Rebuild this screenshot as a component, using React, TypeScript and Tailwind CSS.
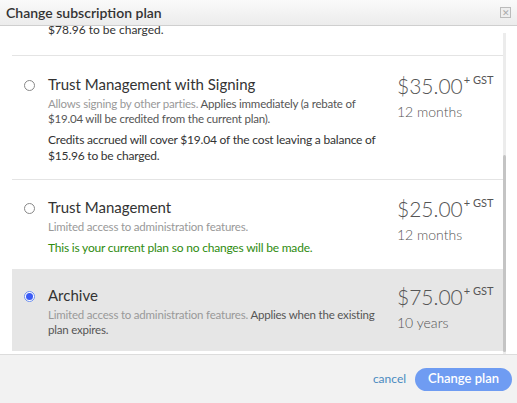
const font = { fontFamily: "Lato, 'Liberation Sans', sans-serif" };

function Price({ amount, term }: { amount: string; term: string }) {
  return (
    <div className="w-[106px] shrink-0 text-[#555]">
      <div className="flex items-start leading-none">
        <span className="text-[21px] font-light">{amount}</span>
        <span className="text-[11px] ml-[1px] -mt-[1px]">+ GST</span>
      </div>
      <div className="text-[14px] font-light mt-[5px]">{term}</div>
    </div>
  );
}

function Radio({ checked }: { checked?: boolean }) {
  return (
    <div className="w-[36px] shrink-0 pt-[5px] pl-[12px]">
      {checked ? (
        <div className="w-[11px] h-[11px] rounded-full border border-[#6b8ef0] bg-white flex items-center justify-center">
          <div className="w-[7px] h-[7px] rounded-full bg-[#3b5bf5]" />
        </div>
      ) : (
        <div className="w-[11px] h-[11px] rounded-full border border-[#888] bg-white" />
      )}
    </div>
  );
}

export default function App() {
  return (
    <div style={font} className="w-[517px] h-[403px] bg-white flex flex-col overflow-hidden">
      <div className="h-[26px] bg-gradient-to-b from-[#fafafa] to-[#ececec] border-b border-[#cfcfcf] flex items-center justify-between px-[6px] shrink-0">
        <span className="text-[14px] font-semibold text-[#333]">Change subscription plan</span>
        <span className="w-[11px] h-[11px] border border-[#bbb] bg-[#eee] text-[9px] leading-[9px] text-[#aaa] flex items-center justify-center">✕</span>
      </div>
      <div className="relative flex-1 overflow-hidden pl-[12px] pr-[14px]">
        <div className="-mt-[4px] pl-[36px] pb-[17px] border-b border-[#e4e4e4] text-[12px] text-[#333] leading-[16px]">
          $78.96 to be charged.
        </div>
        <div className="flex pt-[19px] pb-[15px] border-b border-[#e4e4e4]">
          <Radio />
          <div className="flex-1 pr-[6px]">
            <div className="text-[15px] text-[#333] leading-[18px]">Trust Management with Signing</div>
            <div className="text-[11.5px] tracking-[-0.2px] leading-[15px] mt-[3px] text-[#999]">
              Allows signing by other parties. <span className="text-[#555]">Applies immediately (a rebate of $19.04 will be credited from the current plan).</span>
            </div>
            <div className="text-[12px] tracking-[-0.2px] leading-[16px] mt-[6px] text-[#333]">
              Credits accrued will cover $19.04 of the cost leaving a balance of $15.96 to be charged.
            </div>
          </div>
          <Price amount="$35.00" term="12 months" />
        </div>
        <div className="flex pt-[18px] pb-[13px]">
          <Radio />
          <div className="flex-1 pr-[6px]">
            <div className="text-[15px] text-[#333] leading-[18px]">Trust Management</div>
            <div className="text-[11.5px] tracking-[-0.2px] leading-[15px] mt-[3px] text-[#999]">Limited access to administration features.</div>
            <div className="text-[12px] tracking-[-0.2px] leading-[16px] mt-[6px] text-[#2e8b0e]">This is your current plan so no changes will be made.</div>
          </div>
          <Price amount="$25.00" term="12 months" />
        </div>
        <div className="flex pt-[17px] pb-[14px] bg-[#e6e6e6]">
          <Radio checked />
          <div className="flex-1 pr-[6px]">
            <div className="text-[15px] text-[#333] leading-[18px]">Archive</div>
            <div className="text-[11.5px] tracking-[-0.2px] leading-[15px] mt-[3px] text-[#999]">
              Limited access to administration features. <span className="text-[#555]">Applies when the existing plan expires.</span>
            </div>
          </div>
          <Price amount="$75.00" term="10 years" />
        </div>
        <div className="absolute right-[11px] top-[7px] bottom-0 w-[3px] bg-[#ececec]">
          <div className="absolute left-0 right-0 top-[122px] bottom-[2px] bg-[#c4c4c4] rounded" />
        </div>
      </div>
      <div className="h-[49px] shrink-0 bg-[#f2f2f2] border-t border-[#dcdcdc] flex items-center justify-end gap-[9px] pr-[5px]">
        <span className="text-[12px] text-[#4a8ac0]">cancel</span>
        <button className="h-[23px] px-[13px] rounded-full bg-[#6f9cf2] text-white text-[13px] font-semibold">Change plan</button>
      </div>
    </div>
  );
}
